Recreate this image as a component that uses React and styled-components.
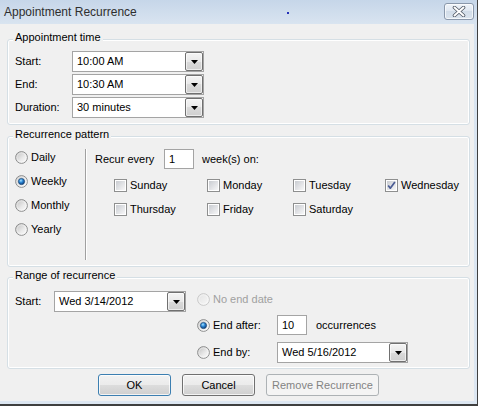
import React from 'react';
import styled, { createGlobalStyle } from 'styled-components';

const Global = createGlobalStyle`
  html, body { margin: 0; padding: 0; background: #ffffff; }
  body {
    font-family: "Liberation Sans", Arial, sans-serif;
    font-size: 11px;
    color: #000;
  }
`;

const Window = styled.div`
  position: relative;
  width: 477px;
  height: 404px;
  border-right: 1px solid #3f3f3f;
  border-bottom: 2px solid #3f3f3f;
  background: linear-gradient(#c6d6e9 0px, #d9e4f0 24px, #dce6f1 100%);
  display: flex;
  flex-direction: column;
`;

const TitleBar = styled.div`
  height: 24px;
  display: flex;
  align-items: center;
  justify-content: space-between;
  padding: 0 3px 0 4px;
`;

const Title = styled.span`
  font-size: 12px;
  line-height: 14px;
  color: #2e2e2e;
`;

const Speck = styled.span`
  position: absolute;
  left: 287px;
  top: 12px;
  width: 2px;
  height: 2px;
  background: #2430b8;
`;

const CloseButton = styled.div`
  width: 30px;
  height: 17px;
  box-sizing: border-box;
  margin-top: -1px;
  border: 1px solid #8a98ab;
  border-radius: 3px;
  background: linear-gradient(#eef3f9, #dfe7f1 50%, #d2dde9 50%, #dbe4ee);
  box-shadow: inset 0 0 0 1px rgba(255, 255, 255, 0.7);
  display: flex;
  align-items: center;
  justify-content: center;
`;

const Client = styled.div`
  width: 474px;
  height: 377px;
  box-sizing: border-box;
  background: #f0f0f0;
  padding: 15px 4px 0 7px;
  display: flex;
  flex-direction: column;
`;

const Group = styled.div`
  position: relative;
  box-sizing: border-box;
  height: ${(p) => p.$h}px;
  margin-top: ${(p) => p.$mt || 0}px;
  border: 1px solid #d5dfe5;
  border-radius: 3px;
  box-shadow: inset 0 0 0 1px #ffffff;
`;

const Legend = styled.span`
  position: absolute;
  top: -9px;
  left: 5px;
  padding: 0 2px;
  background: #f0f0f0;
  line-height: 13px;
`;

const TimeGrid = styled.div`
  display: grid;
  grid-template-columns: 57px 132px;
  grid-auto-rows: 21px;
  row-gap: 2px;
  align-items: center;
  padding: 11px 0 0 7px;
`;

const Label = styled.span`
  line-height: 13px;
  color: ${(p) => (p.$disabled ? '#a0a0a0' : '#000')};
  white-space: nowrap;
`;

const Combo = styled.div`
  display: flex;
  width: ${(p) => p.$w}px;
  height: 21px;
  box-sizing: border-box;
  border: 1px solid #a4a4a4;
  background: #ffffff;
`;

const ComboText = styled.span`
  flex: 1;
  padding-left: 4px;
  line-height: 19px;
  white-space: nowrap;
`;

const DropButton = styled.div`
  width: 18px;
  box-sizing: border-box;
  border: 1px solid #707070;
  border-radius: 2px;
  background: linear-gradient(#f4f4f4, #e8e8e8 50%, #dadada 50%, #cfcfcf);
  box-shadow: inset 0 0 0 1px rgba(255, 255, 255, 0.6);
  display: flex;
  align-items: center;
  justify-content: center;
`;

const TextBox = styled.div`
  width: ${(p) => p.$w}px;
  height: 20px;
  box-sizing: border-box;
  border: 1px solid #a4a4a4;
  background: #ffffff;
  padding-left: 4px;
  line-height: 18px;
`;

const PatternBody = styled.div`
  display: flex;
  height: 100%;
`;

const RadioColumn = styled.div`
  width: 77px;
  box-sizing: border-box;
  padding: 8px 0 0 7px;
  display: flex;
  flex-direction: column;
`;

const Option = styled.div`
  display: flex;
  align-items: center;
  gap: 3px;
  height: ${(p) => p.$h || 24}px;
  width: ${(p) => (p.$w ? `${p.$w}px` : 'auto')};
  flex-shrink: 0;
`;

const Separator = styled.div`
  width: 1px;
  height: 111px;
  margin-top: 12px;
  background: #a0a0a0;
  box-shadow: 1px 0 0 #ffffff;
`;

const RecurArea = styled.div`
  padding: 12px 0 0 9px;
  display: flex;
  flex-direction: column;
`;

const RecurRow = styled.div`
  display: flex;
  align-items: center;
  height: 20px;
`;

const RecurLabel = styled.span`
  width: 69px;
  line-height: 13px;
`;

const After = styled.span`
  margin-left: ${(p) => p.$ml}px;
  line-height: 13px;
`;

const DaysGrid = styled.div`
  display: grid;
  grid-template-columns: 93px 86px 92px auto;
  grid-auto-rows: 24px;
  margin: 4px 0 0 19px;
`;

const RangeBody = styled.div`
  display: flex;
`;

const StartRow = styled.div`
  display: flex;
  align-items: center;
  padding: 13px 0 0 7px;
  align-self: flex-start;
`;

const StartLabel = styled.span`
  width: 39px;
  line-height: 13px;
`;

const EndColumn = styled.div`
  display: flex;
  flex-direction: column;
  margin-left: 11px;
  padding-top: 11px;
`;

const EndRow = styled.div`
  display: flex;
  align-items: center;
  height: ${(p) => p.$h}px;
  margin-top: ${(p) => p.$mt}px;
`;

const ButtonRow = styled.div`
  display: flex;
  gap: 11px;
  margin: 5px 0 0 91px;
`;

const Button = styled.div`
  width: ${(p) => p.$w}px;
  height: 22px;
  box-sizing: border-box;
  border: 1px solid ${(p) => (p.$disabled ? '#adb2b5' : p.$default ? '#3c7fb1' : '#707070')};
  border-radius: 3px;
  background: ${(p) =>
    p.$disabled
      ? '#f4f4f4'
      : 'linear-gradient(#f2f2f2, #ebebeb 50%, #dddddd 50%, #cfcfcf)'};
  box-shadow: ${(p) => (p.$disabled ? 'none' : 'inset 0 0 0 1px rgba(255,255,255,0.75)')};
  color: ${(p) => (p.$disabled ? '#838383' : '#000')};
  display: flex;
  align-items: center;
  justify-content: center;
  line-height: 13px;
`;

const HiddenSvg = styled.svg`
  position: absolute;
  width: 0;
  height: 0;
`;

const Defs = () => (
  <HiddenSvg aria-hidden="true">
    <defs>
      <linearGradient id="radioFill" x1="0" y1="0" x2="1" y2="1">
        <stop offset="0" stopColor="#bdbdbd" />
        <stop offset="0.6" stopColor="#ececec" />
        <stop offset="1" stopColor="#fbfbfb" />
      </linearGradient>
      <linearGradient id="radioFillDis" x1="0" y1="0" x2="1" y2="1">
        <stop offset="0" stopColor="#e2e2e2" />
        <stop offset="1" stopColor="#f8f8f8" />
      </linearGradient>
      <radialGradient id="radioDot" cx="0.4" cy="0.35" r="0.65">
        <stop offset="0" stopColor="#a8e4ff" />
        <stop offset="0.45" stopColor="#2f8ad8" />
        <stop offset="1" stopColor="#0c3f7c" />
      </radialGradient>
      <linearGradient id="boxFill" x1="0" y1="0" x2="1" y2="1">
        <stop offset="0" stopColor="#c9ccd1" />
        <stop offset="1" stopColor="#f7f7f8" />
      </linearGradient>
    </defs>
  </HiddenSvg>
);

const Radio = ({ checked, disabled }) => (
  <svg width="13" height="13" viewBox="0 0 13 13">
    <circle
      cx="6.5"
      cy="6.5"
      r="5.9"
      fill={disabled ? 'url(#radioFillDis)' : 'url(#radioFill)'}
      stroke={disabled ? '#cacaca' : '#8e8f8f'}
      strokeWidth="1"
    />
    <circle cx="6.5" cy="6.5" r="4.6" fill="none" stroke="#ffffff" strokeOpacity="0.5" strokeWidth="0.8" />
    {checked && <circle cx="6.5" cy="6.5" r="3.1" fill="url(#radioDot)" stroke="#1b4877" strokeWidth="0.7" />}
  </svg>
);

const Check = ({ checked }) => (
  <svg width="13" height="13" viewBox="0 0 13 13">
    <rect x="0.5" y="0.5" width="12" height="12" fill="#ffffff" stroke="#8e8f8f" />
    <rect x="2" y="2" width="9" height="9" fill="url(#boxFill)" />
    {checked && (
      <path d="M3.2 6.4 L5.3 9.2 L9.9 2.9" fill="none" stroke="#4a5c94" strokeWidth="1.7" strokeLinejoin="round" />
    )}
  </svg>
);

const Arrow = () => (
  <svg width="7" height="4" viewBox="0 0 7 4">
    <path d="M0 0 H7 L3.5 4 Z" fill="#000" />
  </svg>
);

const CloseX = () => (
  <svg width="14" height="11" viewBox="0 0 14 11">
    <path d="M2.5 1.5 L11.5 9.5 M11.5 1.5 L2.5 9.5" stroke="#4f5763" strokeWidth="3.6" strokeLinecap="round" />
    <path d="M2.5 1.5 L11.5 9.5 M11.5 1.5 L2.5 9.5" stroke="#ffffff" strokeWidth="2" strokeLinecap="round" />
  </svg>
);

const ComboBox = ({ w, value }) => (
  <Combo $w={w}>
    <ComboText>{value}</ComboText>
    <DropButton>
      <Arrow />
    </DropButton>
  </Combo>
);

const days = [
  ['Sunday', false],
  ['Monday', false],
  ['Tuesday', false],
  ['Wednesday', true],
  ['Thursday', false],
  ['Friday', false],
  ['Saturday', false],
];

export default function App() {
  return (
    <>
      <Global />
      <Defs />
      <Window>
        <TitleBar>
          <Title>Appointment Recurrence</Title>
          <CloseButton>
            <CloseX />
          </CloseButton>
        </TitleBar>
        <Speck />
        <Client>
          <Group $h={86}>
            <Legend>Appointment time</Legend>
            <TimeGrid>
              <Label>Start:</Label>
              <ComboBox w={132} value="10:00 AM" />
              <Label>End:</Label>
              <ComboBox w={132} value="10:30 AM" />
              <Label>Duration:</Label>
              <ComboBox w={132} value="30 minutes" />
            </TimeGrid>
          </Group>

          <Group $h={131} $mt={11}>
            <Legend>Recurrence pattern</Legend>
            <PatternBody>
              <RadioColumn>
                {['Daily', 'Weekly', 'Monthly', 'Yearly'].map((r) => (
                  <Option key={r}>
                    <Radio checked={r === 'Weekly'} />
                    <Label>{r}</Label>
                  </Option>
                ))}
              </RadioColumn>
              <Separator />
              <RecurArea>
                <RecurRow>
                  <RecurLabel>Recur every</RecurLabel>
                  <TextBox $w={30}>1</TextBox>
                  <After $ml={8}>week(s) on:</After>
                </RecurRow>
                <DaysGrid>
                  {days.map(([d, c]) => (
                    <Option key={d}>
                      <Check checked={c} />
                      <Label>{d}</Label>
                    </Option>
                  ))}
                </DaysGrid>
              </RecurArea>
            </PatternBody>
          </Group>

          <Group $h={92} $mt={10}>
            <Legend>Range of recurrence</Legend>
            <RangeBody>
              <StartRow>
                <StartLabel>Start:</StartLabel>
                <ComboBox w={132} value="Wed 3/14/2012" />
              </StartRow>
              <EndColumn>
                <EndRow $h={20} $mt={0}>
                  <Option $h={20}>
                    <Radio disabled />
                    <Label $disabled>No end date</Label>
                  </Option>
                </EndRow>
                <EndRow $h={20} $mt={6}>
                  <Option $h={20} $w={80}>
                    <Radio checked />
                    <Label>End after:</Label>
                  </Option>
                  <TextBox $w={30}>10</TextBox>
                  <After $ml={9}>occurrences</After>
                </EndRow>
                <EndRow $h={21} $mt={7}>
                  <Option $h={21} $w={80}>
                    <Radio />
                    <Label>End by:</Label>
                  </Option>
                  <ComboBox w={131} value="Wed 5/16/2012" />
                </EndRow>
              </EndColumn>
            </RangeBody>
          </Group>

          <ButtonRow>
            <Button $w={73} $default>OK</Button>
            <Button $w={73}>Cancel</Button>
            <Button $w={113} $disabled>Remove Recurrence</Button>
          </ButtonRow>
        </Client>
      </Window>
    </>
  );
}
